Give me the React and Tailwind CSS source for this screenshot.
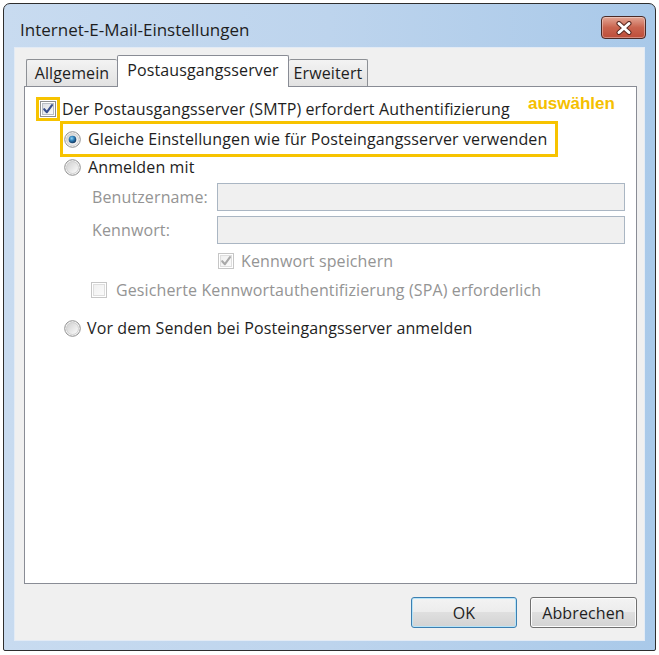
function CheckBox({ checked, disabled }) {
  const border = disabled ? '#c6c6c6' : '#8e8f8f'
  const mark = disabled ? '#a9a9a9' : '#39508c'
  return (
    <svg width="16" height="16" viewBox="0 0 16 16" className="shrink-0">
      <defs>
        <linearGradient id={disabled ? 'cbd' : 'cbe'} x1="0" y1="0" x2="1" y2="1">
          <stop offset="0" stopColor={disabled ? '#f0f0f0' : '#dcdfe3'} />
          <stop offset="1" stopColor={disabled ? '#fbfbfb' : '#fbfbfb'} />
        </linearGradient>
      </defs>
      <rect x="0.5" y="0.5" width="15" height="15" fill="#fff" stroke={border} />
      <rect x="2.5" y="2.5" width="11" height="11" fill={`url(#${disabled ? 'cbd' : 'cbe'})`} stroke={disabled ? '#dedede' : '#b9bec5'} />
      {checked && <path d="M4.2 8.2 L6.9 11.2 L12 4.2" fill="none" stroke={mark} strokeWidth="2.1" strokeLinecap="round" strokeLinejoin="round" />}
    </svg>
  )
}

function Radio({ selected }) {
  return (
    <svg width="17" height="17" viewBox="0 0 17 17" className="shrink-0">
      <defs>
        <linearGradient id="rbg" x1="0" y1="0" x2="1" y2="1">
          <stop offset="0" stopColor="#cfcfcf" />
          <stop offset="1" stopColor="#fdfdfd" />
        </linearGradient>
        <radialGradient id="rdot" cx="0.4" cy="0.35" r="0.7">
          <stop offset="0" stopColor="#8fd3f5" />
          <stop offset="0.45" stopColor="#2f80b9" />
          <stop offset="1" stopColor="#0e2c52" />
        </radialGradient>
      </defs>
      <circle cx="8.5" cy="8.5" r="7.8" fill="#f4f4f4" stroke="#8f8f8f" strokeWidth="1" />
      <circle cx="8.5" cy="8.5" r="6" fill="url(#rbg)" stroke="#c9c9c9" strokeWidth="0.8" />
      {selected && <circle cx="8.5" cy="8.5" r="3.8" fill="url(#rdot)" />}
    </svg>
  )
}

function Tab({ label, active, className }) {
  if (active) {
    return (
      <div className={`h-[32px] z-10 bg-white border border-b-0 border-[#898c95] rounded-t-[2px] flex justify-center pt-[4px] leading-[20px] ${className}`}>
        {label}
      </div>
    )
  }
  return (
    <div className={`h-[27px] mb-[1px] bg-gradient-to-b from-[#f3f3f3] to-[#e2e2e2] border border-b-0 border-[#8d9095] rounded-t-[2px] flex justify-center pt-[3px] leading-[20px] ${className}`}>
      {label}
    </div>
  )
}

function Field({ label }) {
  return (
    <div className="flex items-center h-[28px] ml-[67px]">
      <span className="w-[125px] text-[#949494]">{label}</span>
      <div className="w-[408px] h-[28px] bg-[#f0f0f0] border border-[#aab6c3]" />
    </div>
  )
}

export default function App() {
  return (
    <div className="w-[659px] h-[655px] bg-white pl-[3px] pt-[3px] font-['Open_Sans','Noto_Sans',sans-serif] text-[16px] tracking-[0.12px] text-[#1e1e1e]">
      <div className="w-[653px] h-[648px] border border-[#2e2e2e] rounded-t-[7px] rounded-b-[2px] bg-gradient-to-r from-[#c8dbf0] via-[#bdd4ed] to-[#a9c9e9] flex flex-col">
        {/* title bar */}
        <div className="h-[43px] flex items-start justify-between pl-[16px] pr-[9px]">
          <span className="mt-[15px] leading-[22px] text-[17px] tracking-normal">Internet-E-Mail-Einstellungen</span>
          <div className="mt-[12px] w-[45px] h-[23px] rounded-[4px] border border-[#4a2a26] bg-gradient-to-b from-[#e2a695] via-[#c9644f] to-[#bd4d39] flex items-center justify-center shadow-[inset_0_0_0_1px_rgba(255,255,255,0.35)]">
            <svg width="18" height="14" viewBox="0 0 18 14">
              <path d="M4 2.5 L14 11.5 M14 2.5 L4 11.5" stroke="#5a2a22" strokeWidth="5" strokeLinecap="round" />
              <path d="M4 2.5 L14 11.5 M14 2.5 L4 11.5" stroke="#fff" strokeWidth="3" strokeLinecap="round" />
            </svg>
          </div>
        </div>

        {/* client area */}
        <div className="mx-[10px] flex-1 bg-[#f0f0f0] border border-[#e3ebf5] flex flex-col pt-[7px] pl-[9px] pr-[7px]">
          <div className="flex items-end pl-[2px] -mb-[1px]">
            <Tab label="Allgemein" className="w-[91px] border-r-0" />
            <Tab label="Postausgangsserver" active className="w-[172px]" />
            <Tab label="Erweitert" className="w-[79px] border-l-0" />
          </div>

          <div className="relative h-[498px] bg-white border border-[#898c95] flex flex-col">
            <span className="absolute left-[503px] top-[6px] leading-[22px] tracking-normal font-['Liberation_Sans',Arial,sans-serif] font-bold text-[17px] text-[#f5c000]">auswählen</span>

            <div className="mt-[10px] ml-[11px] h-[24px] flex items-center">
              <span className="w-[24px] h-[24px] border-[3px] border-[#f7c300] flex items-center justify-center">
                <CheckBox checked />
              </span>
              <span className="ml-[2px]">Der Postausgangsserver (SMTP) erfordert Authentifizierung</span>
            </div>

            <div className="ml-[35px] w-[498px] h-[36px] border-[3px] border-[#f7c300] flex items-center">
              <span className="ml-[1px]"><Radio selected /></span>
              <span className="ml-[7px]">Gleiche Einstellungen wie für Posteingangsserver verwenden</span>
            </div>

            <div className="ml-[39px] h-[20px] flex items-center gap-[7px]">
              <Radio />
              <span>Anmelden mit</span>
            </div>

            <div className="mt-[6px]"><Field label="Benutzername:" /></div>
            <div className="mt-[5px]"><Field label="Kennwort:" /></div>

            <div className="mt-[7px] ml-[193px] h-[20px] flex items-center gap-[7px] text-[#949494]">
              <CheckBox checked disabled />
              <span>Kennwort speichern</span>
            </div>

            <div className="mt-[9px] ml-[66px] h-[20px] flex items-center gap-[9px] text-[#949494]">
              <CheckBox disabled />
              <span>Gesicherte Kennwortauthentifizierung (SPA) erforderlich</span>
            </div>

            <div className="mt-[18px] ml-[39px] h-[20px] flex items-center gap-[6px]">
              <Radio />
              <span>Vor dem Senden bei Posteingangsserver anmelden</span>
            </div>
          </div>

          <div className="mt-[13px] flex justify-end gap-[13px]">
            <button className="w-[106px] h-[31px] rounded-[3px] border border-[#3c7fb1] shadow-[inset_0_0_0_1px_#b7e4f8] bg-[linear-gradient(#f3f3f3_0%,#ececec_50%,#dfdfdf_50%,#d3d3d3_100%)] text-[#1e1e1e]">OK</button>
            <button className="w-[107px] h-[31px] rounded-[3px] border border-[#707070] shadow-[inset_0_0_0_1px_#fcfcfc] bg-[linear-gradient(#f3f3f3_0%,#ececec_50%,#dfdfdf_50%,#d3d3d3_100%)] text-[#1e1e1e]">Abbrechen</button>
          </div>
        </div>
        <div className="h-[9px]" />
      </div>
    </div>
  )
}
